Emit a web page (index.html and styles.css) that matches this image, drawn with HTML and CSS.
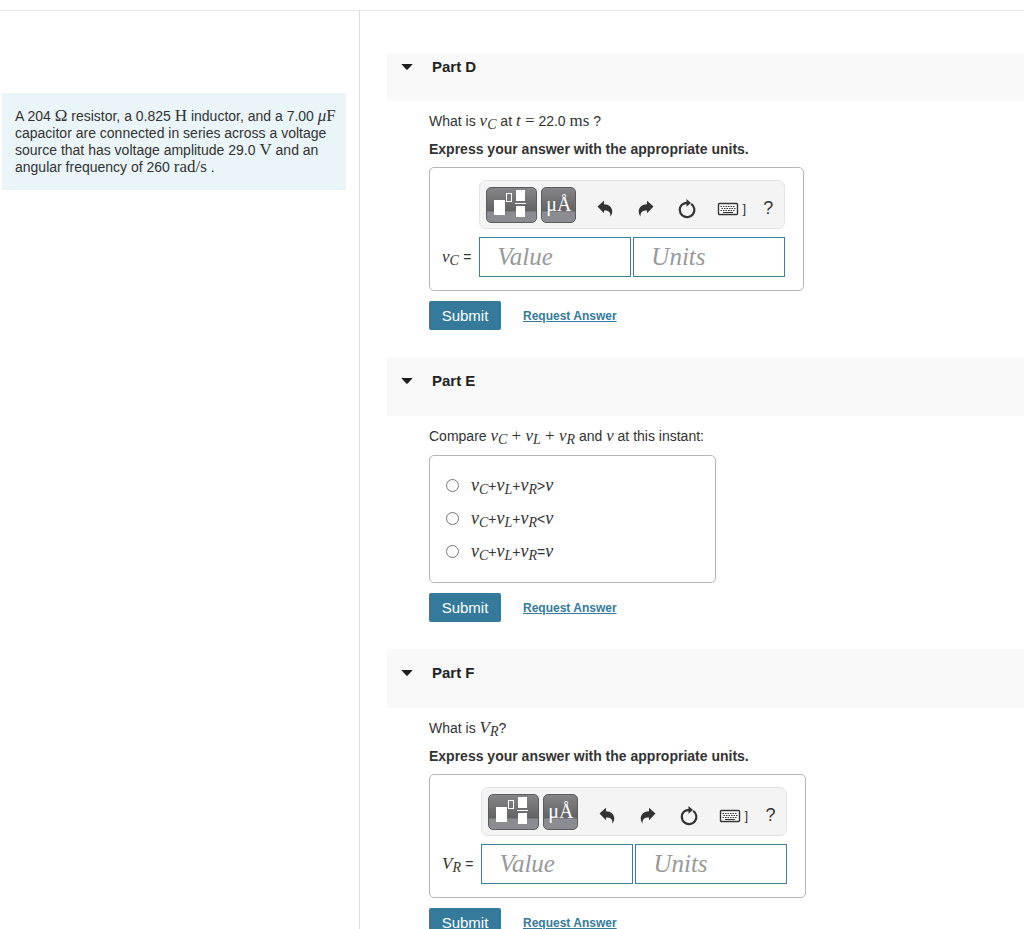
FILE: index.html
```html
<!DOCTYPE html>
<html lang="en">
<head>
    <meta charset="UTF-8">
    <meta name="viewport" content="width=device-width, initial-scale=1.0">
    <title>RLC Circuit Problem</title>
    <link rel="stylesheet" href="styles.css">
</head>
<body>
    <!-- Shared icons -->
    <svg class="sprite" aria-hidden="true">
        <symbol id="icon-caret" viewBox="0 0 12 8">
            <path d="M1 1h10q.8 0 .3.6L6.7 6.5q-.7.6-1.4 0L.7 1.6Q.2 1 1 1z" fill="#1f1f1f"/>
        </symbol>
        <symbol id="icon-template" viewBox="0 0 49 34">
            <rect x="7" y="12" width="11" height="15" fill="#fff"/>
            <rect x="19.500" y="5.500" width="5" height="8" fill="none" stroke="#fff"/>
            <rect x="29" y="2" width="9" height="11" fill="#fff"/>
            <path d="M28 15.500h11" stroke="#fff"/>
            <rect x="29" y="18" width="9" height="11" fill="#fff"/>
        </symbol>
        <symbol id="icon-undo" viewBox="0 0 16 18">
            <path d="M.5 6.500L7 .8v3.400c5 .2 8.300 3 8.300 7.400q0 3-1.900 5.200c.5-4.500-1.600-6.300-6.400-6.300v2.700z" fill="#333"/>
        </symbol>
        <symbol id="icon-redo" viewBox="0 0 16 18">
            <path d="M15.500 6.500L9 .8v3.400C4 4.400.7 7.200.7 11.600q0 3 1.900 5.200C2.100 12.300 4.200 10.500 9 10.500v2.700z" fill="#333"/>
        </symbol>
        <symbol id="icon-reset" viewBox="0 0 20 20">
            <path d="M14.200 4.800A7.300 7.300 0 1 1 4.800 5.800Q7 3.800 10.500 3.800" fill="none" stroke="#333" stroke-width="2.200"/>
            <path d="M9.500 0l4.500 3.900-4.500 3.900z" fill="#333"/>
        </symbol>
        <symbol id="icon-keyboard" viewBox="0 0 22 14">
            <rect x="1.500" y="1.500" width="19" height="11" rx="1" fill="#fff" stroke="#333" stroke-width="1.400"/>
            <path d="M3.500 4.500h15M4.500 6.500h14M3.500 8.500h15" stroke="#333" stroke-dasharray="1.500 1"/>
            <path d="M6 10.500h10" stroke="#333"/>
        </symbol>
    </svg>

    <div class="layout">
        <aside class="sidebar">
            <p class="problem">A 204 <span class="unit">Ω</span> resistor, a 0.825 <span class="unit">H</span> inductor, and a 7.00 <span class="unit"><i>μ</i>F</span> capacitor are connected in series across a voltage source that has voltage amplitude 29.0 <span class="unit">V</span> and an angular frequency of 260 <span class="unit">rad/s</span> .</p>
        </aside>

        <main class="parts">
            <section class="part">
                <h2 class="part-header"><svg class="caret"><use href="#icon-caret"/></svg>Part D</h2>
                <form class="part-body">
                    <p class="question">What is <span class="math"><i>v<sub>C</sub></i></span> at <span class="math"><i>t</i> =</span> 22.0 <span class="math">ms</span> ?</p>
                    <p class="question instructions">Express your answer with the appropriate units.</p>
                    <div class="answer-box">
                        <div class="toolbar">
                            <button type="button" class="tool-dark tool-wide" aria-label="Templates"><svg><use href="#icon-template"/></svg></button>
                            <button type="button" class="tool-dark">μÅ</button>
                            <button type="button" class="tool" aria-label="Undo"><svg width="16" height="18"><use href="#icon-undo"/></svg></button>
                            <button type="button" class="tool" aria-label="Redo"><svg width="16" height="18"><use href="#icon-redo"/></svg></button>
                            <button type="button" class="tool" aria-label="Reset"><svg width="20" height="20"><use href="#icon-reset"/></svg></button>
                            <button type="button" class="tool tool-keys" aria-label="Keyboard shortcuts"><svg width="22" height="14"><use href="#icon-keyboard"/></svg><span>]</span></button>
                            <button type="button" class="tool tool-help">?</button>
                        </div>
                        <label class="symbol" for="value-d"><i>v<sub>C</sub></i> <span>=</span></label>
                        <div class="fields">
                            <input type="text" id="value-d" placeholder="Value">
                            <input type="text" aria-label="Units" placeholder="Units">
                        </div>
                    </div>
                    <div class="actions">
                        <button type="button" class="submit">Submit</button>
                        <a href="#" class="request">Request Answer</a>
                    </div>
                </form>
            </section>

            <section class="part">
                <h2 class="part-header"><svg class="caret"><use href="#icon-caret"/></svg>Part E</h2>
                <form class="part-body">
                    <p class="question">Compare <span class="math"><i>v<sub>C</sub></i> + <i>v<sub>L</sub></i> + <i>v<sub>R</sub></i></span> and <span class="math"><i>v</i></span> at this instant:</p>
                    <div class="choices">
                        <label class="choice"><input type="radio" name="compare"><span><i>v<sub>C</sub></i>+<i>v<sub>L</sub></i>+<i>v<sub>R</sub></i>&gt;<i>v</i></span></label>
                        <label class="choice"><input type="radio" name="compare"><span><i>v<sub>C</sub></i>+<i>v<sub>L</sub></i>+<i>v<sub>R</sub></i>&lt;<i>v</i></span></label>
                        <label class="choice"><input type="radio" name="compare"><span><i>v<sub>C</sub></i>+<i>v<sub>L</sub></i>+<i>v<sub>R</sub></i>=<i>v</i></span></label>
                    </div>
                    <div class="actions">
                        <button type="button" class="submit">Submit</button>
                        <a href="#" class="request">Request Answer</a>
                    </div>
                </form>
            </section>

            <section class="part">
                <h2 class="part-header"><svg class="caret"><use href="#icon-caret"/></svg>Part F</h2>
                <form class="part-body">
                    <p class="question">What is <span class="math"><i>V<sub>R</sub></i></span>?</p>
                    <p class="question instructions">Express your answer with the appropriate units.</p>
                    <div class="answer-box">
                        <div class="toolbar">
                            <button type="button" class="tool-dark tool-wide" aria-label="Templates"><svg><use href="#icon-template"/></svg></button>
                            <button type="button" class="tool-dark">μÅ</button>
                            <button type="button" class="tool" aria-label="Undo"><svg width="16" height="18"><use href="#icon-undo"/></svg></button>
                            <button type="button" class="tool" aria-label="Redo"><svg width="16" height="18"><use href="#icon-redo"/></svg></button>
                            <button type="button" class="tool" aria-label="Reset"><svg width="20" height="20"><use href="#icon-reset"/></svg></button>
                            <button type="button" class="tool tool-keys" aria-label="Keyboard shortcuts"><svg width="22" height="14"><use href="#icon-keyboard"/></svg><span>]</span></button>
                            <button type="button" class="tool tool-help">?</button>
                        </div>
                        <label class="symbol" for="value-f"><i>V<sub>R</sub></i> <span>=</span></label>
                        <div class="fields">
                            <input type="text" id="value-f" placeholder="Value">
                            <input type="text" aria-label="Units" placeholder="Units">
                        </div>
                    </div>
                    <div class="actions">
                        <button type="button" class="submit">Submit</button>
                        <a href="#" class="request">Request Answer</a>
                    </div>
                </form>
            </section>
        </main>
    </div>
</body>
</html>
```
FILE: styles.css
```css
* {
    box-sizing: border-box;
}
body {
    margin: 0;
    padding-top: 10px;
    height: 100vh;
    background-color: #fff;
    color: #333;
    font-family: "Liberation Sans", Arial, sans-serif;
    font-size: 14px;
}
.sprite {
    display: none;
}
.layout {
    display: flex;
    height: 100%;
    border-top: 1px solid #e6e6e6;
}
.sidebar {
    width: 360px;
    flex-shrink: 0;
    padding: 82px 13px 0 2px;
    border-right: 1px solid #d9dce0;
}
.problem {
    margin: 0;
    padding: 15px 8px 14px 13px;
    background-color: #e9f5f8;
    line-height: 17px;
}
.unit,
.math,
.symbol,
.choice i {
    font-family: "Liberation Serif", "Times New Roman", serif;
}
.unit,
.math {
    font-size: 17px;
    line-height: 0;
}
sub {
    font-size: 14px;
    line-height: 0;
    vertical-align: -3px;
}
/* Parts scroll on their own next to the problem text */
.parts {
    flex: 1;
    padding: 42px 0 0 27px;
    overflow-y: auto;
    scrollbar-width: none;
}
.part-header {
    display: flex;
    gap: 19px;
    margin: 0;
    padding: 15px 14px 26px;
    background-color: #f9f9f9;
    color: #222;
    font-size: 15px;
    line-height: 18px;
}
.part:first-child .part-header {
    padding-top: 5px;
    padding-bottom: 25px;
}
.caret {
    width: 12px;
    height: 8px;
    margin-top: 5px;
}
.part-body {
    padding: 11px 0 27px 42px;
}
.question {
    margin: 0 0 10px;
    line-height: 18px;
}
.instructions {
    margin-bottom: 9px;
    font-weight: bold;
}
.answer-box {
    display: inline-grid;
    grid-template-columns: auto 306px;
    gap: 8px;
    padding: 12px 18px 13px 12px;
    border: 1px solid #b5b5b5;
    border-radius: 5px;
    vertical-align: top;
}
.toolbar {
    grid-column: 2;
    display: flex;
    align-items: center;
    height: 49px;
    padding-left: 6px;
    background-color: #f4f4f4;
    border: 1px solid #e3e3e3;
    border-radius: 7px;
}
.tool-dark {
    flex-shrink: 0;
    width: 35px;
    height: 36px;
    margin-right: 4px;
    padding: 0;
    border: 1px solid #5c5c5f;
    border-radius: 5px;
    background: linear-gradient(#858588, #626264 68%, #8b8b92 70%, #8b8b92);
    color: #fff;
    font-family: "Liberation Serif", "Times New Roman", serif;
    font-size: 20px;
}
.tool-wide {
    width: 51px;
}
.tool-wide svg {
    display: block;
    width: 49px;
    height: 34px;
}
.tool {
    display: flex;
    flex-shrink: 0;
    align-items: center;
    justify-content: center;
    width: 41px;
    height: 36px;
    margin-top: 8px;
    padding: 0;
    border: 0;
    background: none;
    color: #333;
    font-family: inherit;
}
.tool-dark + .tool {
    margin-left: 4px;
}
.tool-keys {
    gap: 4px;
    width: 48px;
    font-size: 13px;
}
.tool-help {
    width: 26px;
    font-size: 18px;
}
.symbol {
    align-self: center;
    font-size: 17px;
}
.symbol span {
    font-family: "Liberation Sans", Arial, sans-serif;
    font-size: 14px;
}
.fields {
    display: flex;
    gap: 2px;
}
.fields input {
    flex: 1;
    min-width: 0;
    height: 40px;
    padding: 0 17px;
    border: 1px solid #3d7f9f;
    background-color: #fff;
    font-family: "Liberation Serif", "Times New Roman", serif;
    font-size: 25px;
    font-style: italic;
}
.fields input::placeholder {
    color: #999;
    opacity: 1;
}
.choices {
    max-width: 287px;
    padding: 13px 16px 14px;
    border: 1px solid #b5b5b5;
    border-radius: 5px;
}
.choice {
    display: flex;
    align-items: center;
    gap: 12px;
    height: 33px;
}
.choice i {
    font-size: 18px;
}
.choice input {
    appearance: none;
    width: 13px;
    height: 13px;
    margin: 0;
    border: 1px solid #777;
    border-radius: 50%;
    background-color: #fff;
}
.choice input:checked {
    background-color: #357a9b;
}
.actions {
    display: flex;
    align-items: center;
    gap: 22px;
    margin-top: 10px;
}
.submit {
    width: 72px;
    height: 29px;
    padding: 0;
    border: 0;
    border-radius: 2px;
    background-color: #357a9b;
    color: #fff;
    font-family: inherit;
    font-size: 15px;
}
.request {
    color: #357a9b;
    font-size: 12px;
    font-weight: bold;
}
```
